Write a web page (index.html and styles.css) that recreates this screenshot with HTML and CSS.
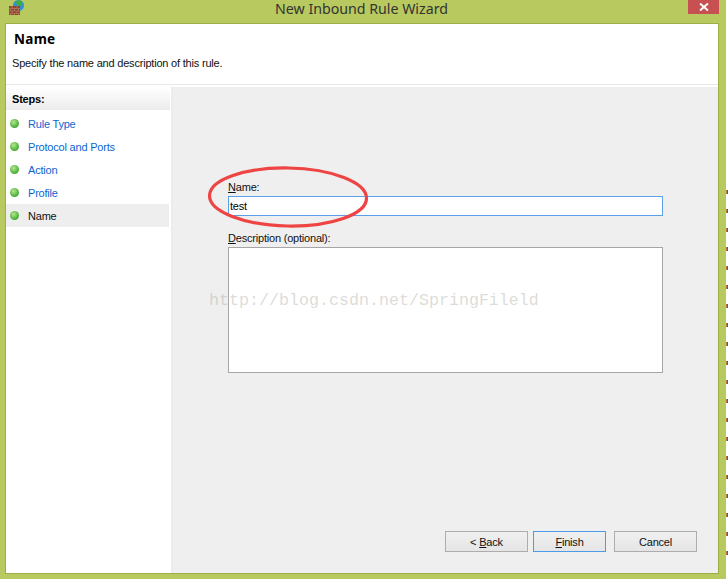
FILE: index.html
```html
<!DOCTYPE html>
<html lang="en">
<head>
<meta charset="utf-8">
<title>New Inbound Rule Wizard</title>
<link rel="stylesheet" href="styles.css">
</head>
<body>
<div class="screen">
  <div class="window">
    <div class="titlebar">
      <svg class="app-icon" width="17" height="16" viewBox="0 0 17 16">
        <circle cx="9.500" cy="5.500" r="5.500" fill="#2f8fd8"/>
        <path d="M6.500 2 10.500 0 13.500 2.500 11.500 6.500 8.500 5.500Z" fill="#3fae3c"/>
        <rect x="0" y="6" width="11" height="9" fill="#8e4630"/>
        <path d="M0 8.500H11M0 11H11M0 13.500H11M3 6V8.500M8 6V8.500M1.500 8.500V11M5.500 8.500V11M9.500 8.500V11M3 11V13.500M8 11V13.500M1.500 13.500V15M5.500 13.500V15M9.500 13.500V15" stroke="#b27a5e" stroke-width=".8" fill="none"/>
      </svg>
      <div class="title">New Inbound Rule Wizard</div>
      <div class="close">
        <svg width="10" height="8" viewBox="0 0 10 8"><path d="M1 .5 9 7.500M9 .5 1 7.500" stroke="#fff" stroke-width="2"/></svg>
      </div>
    </div>
    <div class="client">
      <header class="header">
        <h1 class="heading">Name</h1>
        <p class="subheading">Specify the name and description of this rule.</p>
      </header>
      <div class="body">
        <nav class="steps">
          <div class="steps-title">Steps:</div>
          <ul class="step-list">
            <li class="step"><span class="dot"></span>Rule Type</li>
            <li class="step"><span class="dot"></span>Protocol and Ports</li>
            <li class="step"><span class="dot"></span>Action</li>
            <li class="step"><span class="dot"></span>Profile</li>
            <li class="step current"><span class="dot"></span>Name</li>
          </ul>
        </nav>
        <main class="panel">
          <div class="form">
            <label class="label"><u>N</u>ame:</label>
            <div class="input focused">test</div>
            <label class="label desc-label"><u>D</u>escription (optional):</label>
            <div class="textarea"></div>
          </div>
          <div class="buttons">
            <div class="btn back"><span>&lt; <u>B</u>ack</span></div>
            <div class="btn default"><span><u>F</u>inish</span></div>
            <div class="btn"><span>Cancel</span></div>
          </div>
        </main>
      </div>
    </div>
  </div>
  <div class="edge-dots">
    <i></i><i></i><i></i><i></i><i></i><i></i><i></i><i></i><i></i><i></i><i></i><i></i><i></i><i></i><i></i><i></i><i></i><i></i><i></i><i></i>
  </div>
</div>
<svg class="ring" width="170" height="70" viewBox="0 0 170 70">
  <ellipse cx="84" cy="35" rx="78.500" ry="29" fill="none" stroke="#ef4444" stroke-width="3.200" transform="rotate(1 84 35)"/>
</svg>
<div class="watermark">http://blog.csdn.net/SpringFileld</div>
</body>
</html>
```

FILE: styles.css
```css
* { box-sizing: border-box; }
html, body { margin: 0; padding: 0; }
body {
  width: 728px;
  height: 579px;
  overflow: hidden;
  background: #fff;
  font-family: "Liberation Sans", Arial, sans-serif;
  font-size: 11px;
  letter-spacing: -.2px;
  color: #000;
  position: relative;
}
.screen { display: flex; height: 579px; }
.window {
  width: 726px;
  height: 579px;
  flex: none;
  background: #b8c95f;
  padding: 0 8px 6px 6px;
  display: flex;
  flex-direction: column;
}
.titlebar {
  height: 24px;
  flex: none;
  display: flex;
  position: relative;
  justify-content: center;
  align-items: flex-start;
}
.app-icon { position: absolute; left: 3px; top: 0; }
.title {
  font-family: "Noto Sans", sans-serif;
  font-size: 14.200px;
  line-height: 18px;
  letter-spacing: 0;
  color: #333;
  margin-right: 1px;
}
.close {
  position: absolute;
  right: -1px;
  top: 0;
  width: 31px;
  height: 14px;
  background: #c75050;
  display: flex;
  align-items: center;
  justify-content: center;
}
.client {
  flex: 1;
  min-height: 0;
  display: flex;
  flex-direction: column;
  background: #fff;
  box-shadow: 0 0 0 1px #9cad4a;
}
.header {
  height: 61px;
  flex: none;
  padding: 6px 8px 0 8px;
  background: #fff;
  border-bottom: 1px solid #e9e9e9;
}
.heading {
  margin: 0;
  font-family: "Noto Sans", sans-serif;
  font-size: 13.500px;
  line-height: 18px;
  font-weight: 700;
  letter-spacing: .3px;
}
.subheading { margin: 7px 0 0 -2px; line-height: 16px; color: #111; }
.body { flex: 1; min-height: 0; display: flex; padding-top: 2px; }
.steps {
  width: 167px;
  flex: none;
  background: #fff;
  border-right: 2px solid #ececec;
}
.steps-title {
  height: 23px;
  width: 164px;
  padding: 4px 0 0 6px;
  font-weight: 700;
  line-height: 17px;
  background: linear-gradient(#fff, #ececec);
}
.step-list { list-style: none; margin: 0; padding: 2px 0 0; width: 163px; }
.step {
  height: 23px;
  display: flex;
  align-items: center;
  color: #0b66d0;
  padding-left: 4px;
}
.step.current { background: #eeeeee; color: #111; }
.dot {
  width: 9px;
  height: 9px;
  border-radius: 50%;
  margin-right: 9px;
  background: radial-gradient(circle at 40% 35%, #b4e88c, #45ab33 70%, #3a9a2c);
}
.panel {
  flex: 1;
  min-width: 0;
  background: #efefef;
  position: relative;
  display: flex;
  flex-direction: column;
  justify-content: space-between;
  padding: 93px 21px 21px 55px;
}
.form { display: flex; flex-direction: column; margin-right: 34px; }
.label { line-height: 15px; color: #111; }
.input {
  height: 20px;
  margin-top: 1px;
  background: #fff;
  border: 1px solid #5aa0ea;
  padding-left: 1px;
  line-height: 19px;
}
.desc-label { margin-top: 15px; }
.textarea {
  height: 126px;
  margin-top: 1px;
  background: #fff;
  border: 1px solid #a6a6a6;
}
.buttons { display: flex; justify-content: flex-end; gap: 8px; }
.btn {
  width: 83px;
  height: 21px;
  border: 1px solid #adadad;
  background: linear-gradient(#f0f0f0, #e5e5e5);
  display: flex;
  align-items: center;
  justify-content: center;
  color: #111;
}
.btn.back { margin-right: -3px; }
.btn.default { width: 73px; border-color: #4d9be8; }
.edge-dots {
  flex: 1;
  padding-top: 190px;
  display: flex;
  flex-direction: column;
  gap: 15px;
}
.edge-dots i {
  display: block;
  flex: none;
  width: 2px;
  height: 4px;
  background: #c07a30;
  border-right: 1px solid #3a5fb0;
}
.ring { position: absolute; left: 204px; top: 162px; pointer-events: none; }
.watermark {
  position: absolute;
  left: 209px;
  top: 291px;
  font-family: "Liberation Mono", monospace;
  font-size: 16.670px;
  line-height: 20px;
  letter-spacing: 0;
  color: rgba(170, 170, 160, .42);
  white-space: nowrap;
}
```
